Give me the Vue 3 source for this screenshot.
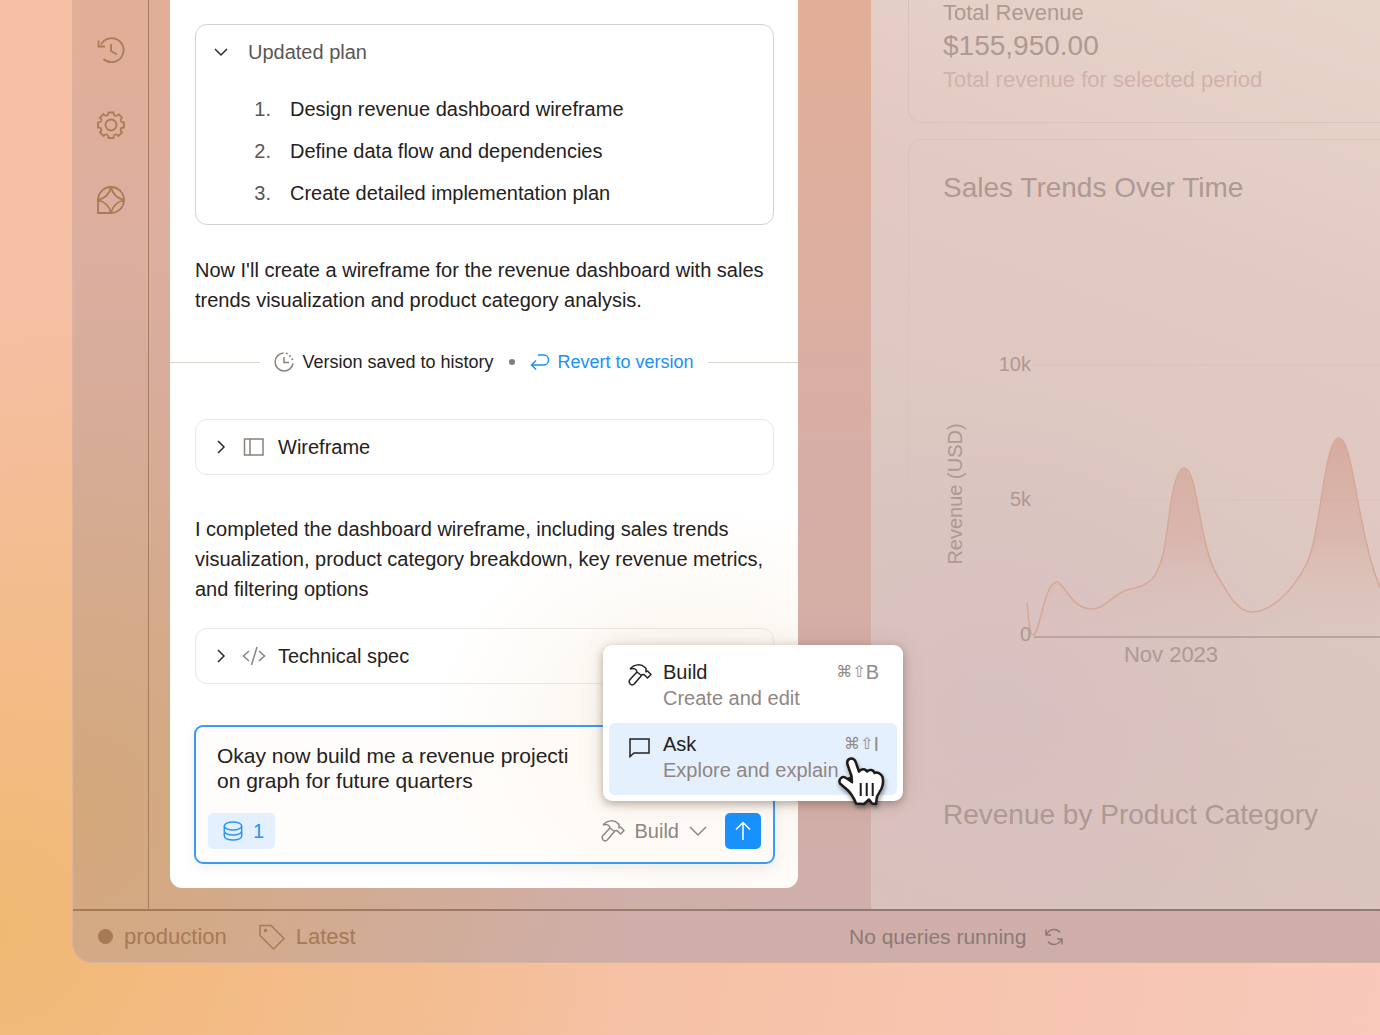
<script setup>
import { ref } from 'vue'

const plan = [
  'Design revenue dashboard wireframe',
  'Define data flow and dependencies',
  'Create detailed implementation plan',
]

const draft = ref('Okay now build me a revenue projecti\non graph for future quarters')

const hammer =
  'M2 6C6 1 13 .5 17 4.5L18 5.5V9L19.5 8L23 11.5L19.5 15L16 11.5L13 12M2 6C6 4.5 8.5 6 9 9L2 16.5C.8 18 1.2 19.8 2.2 21C3.4 22.2 5 22.2 6.200 21L13.500 12.500L9 9'

const curve =
  'M84 263 C86 284 87 295 90 295 C97 295 101 242 114 242 C121 242 128 269 149 269 C162 269 169 255 184 250 C194 247 201 247 209 239 C221 226 223 197 228 162 C232 138 236 128 241 128 C250 128 253 158 260 192 C263 207 267 223 274 235 C286 256 295 272 309 272 C327 272 348 254 364 223 C378 194 381 98 396 98 C406 98 412 150 419 182 C425 212 430 232 437 247 C446 266 458 274 472 274 C492 274 510 262 520 246'
</script>

<template>
  <div class="page">
    <div class="window">
      <div class="workspace">
        <nav class="rail" aria-label="Tools">
          <button type="button" aria-label="History">
            <svg viewBox="0 0 28 28">
              <path d="M6.5 23A12 12 0 1 0 4 8.5M1.5 4.500V10.500H8M14 8V15L20 18.500" />
            </svg>
          </button>
          <button type="button" aria-label="Settings">
            <svg viewBox="0 0 28 28">
              <circle cx="14" cy="14" r="5.5" />
              <path d="M11.5 1.5H16.5Q16.6 4.6 18.4 4.9Q20.3 5 21.7 3.3L25 6.5Q23 8.7 23.6 10Q24.2 11.5 27 11.5V16.5Q24 16.6 23.6 18Q23 19.5 25 21.5L21.5 25Q19.5 23 18 23.6Q16.6 24.2 16.5 27H11.5Q11.4 24.2 10 23.6Q8.5 23 6.5 25L3 21.5Q5 19.5 4.4 18Q3.8 16.6 1 16.5V11.5Q3.8 11.4 4.4 10Q5 8.5 3 6.5L6.5 3Q8.3 5 9.8 4.6Q11.4 4 11.5 1.5Z" />
            </svg>
          </button>
          <button type="button" aria-label="Assistant">
            <svg viewBox="0 0 28 28">
              <path d="M1 27V14A13 13 0 1 1 14 27ZM14 1Q12 11 1 14Q12 17 14 27Q16 17 27 14Q16 11 14 1" />
            </svg>
          </button>
        </nav>

        <div class="chat-column">
          <main class="chat">
            <section class="plan">
              <button type="button" class="plan-head">
                <svg class="chev" viewBox="0 0 14 14"><path d="M1 4L7 10L13 4" /></svg>
                Updated plan
              </button>
              <ol>
                <li v-for="(step, i) in plan" :key="step">
                  <span class="num">{{ i + 1 }}.</span>{{ step }}
                </li>
              </ol>
            </section>

            <p class="msg first">
              Now I'll create a wireframe for the revenue dashboard with sales<br />
              trends visualization and product category analysis.
            </p>

            <div class="version">
              <span class="rule"></span>
              <svg class="saved" viewBox="0 0 20 20">
                <path d="M9.5 1A9 9 0 1 0 19 11.5M10 5V10.5H15" />
                <path class="dots" d="M12.8 1.5V1.5M16 4V4M18.3 7.3V7.3" />
              </svg>
              <span>Version saved to history</span>
              <span class="dot"></span>
              <a href="#">
                <svg viewBox="0 0 20 18"><path d="M8 2H14A4.5 5 0 0 1 14 12H1.5M6 7.5L1.5 12L6 16.5" /></svg>
                Revert to version
              </a>
              <span class="rule"></span>
            </div>

            <button type="button" class="artifact">
              <svg class="chev" viewBox="0 0 14 14"><path d="M4 1L10 7L4 13" /></svg>
              <svg class="kind" viewBox="0 0 24 20"><path d="M2.5 2H21V18H2.5ZM8 2V18" /></svg>
              Wireframe
            </button>

            <p class="msg second">
              I completed the dashboard wireframe, including sales trends<br />
              visualization, product category breakdown, key revenue metrics,<br />
              and filtering options
            </p>

            <button type="button" class="artifact">
              <svg class="chev" viewBox="0 0 14 14"><path d="M4 1L10 7L4 13" /></svg>
              <svg class="kind" viewBox="0 0 24 20"><path d="M7 5L1.5 10L7 15M17 5L22.5 10L17 15M15 1L9.5 19" /></svg>
              Technical spec
            </button>

            <form class="composer" @submit.prevent>
              <textarea v-model="draft" rows="2" aria-label="Message" spellcheck="false"></textarea>
              <div class="tools">
                <button type="button" class="sources" aria-label="1 data source">
                  <svg viewBox="0 0 20 20">
                    <ellipse cx="10" cy="5" rx="8.7" ry="4" />
                    <path d="M1.3 5V15C1.3 17.3 5 19 10 19S18.7 17.3 18.7 15V5M1.3 10C1.3 12.3 5 14 10 14S18.7 12.3 18.7 10" />
                  </svg>
                  1
                </button>
                <button type="button" class="mode" aria-haspopup="menu" aria-expanded="true">
                  <svg class="hammer" viewBox="0 0 24 24"><path :d="hammer" /></svg>
                  Build
                  <svg class="arrow" viewBox="0 0 18 14"><path d="M1 3L9 11L17 3" /></svg>
                </button>
                <button type="submit" class="send" aria-label="Send">
                  <svg viewBox="0 0 20 20"><path d="M10 19V1.5M3 8.5L10 1.5L17 8.5" /></svg>
                </button>
              </div>

              <div class="menu" role="menu">
                <button type="button" role="menuitem">
                  <svg class="hammer" viewBox="0 0 24 24"><path :d="hammer" /></svg>
                  <span class="label">Build<small>Create and edit</small></span>
                  <kbd><i>⌘⇧</i>B</kbd>
                </button>
                <button type="button" role="menuitem" class="active">
                  <svg viewBox="0 0 24 24"><path d="M2 4H21V18H6L2 21.5Z" /></svg>
                  <span class="label">Ask<small>Explore and explain</small></span>
                  <kbd><i>⌘⇧</i>I</kbd>
                </button>
                <svg class="cursor" viewBox="0 0 50 52">
                  <path class="hand" d="M16 26L15.5 20L11.500 8.500C10 2 17 .500 19.500 5.500L23 15.500C25 12.500 29.500 12.500 31 15.500C33.500 13 37.500 13.500 38.500 17C41.500 15.500 45.500 18 46.500 21C47.500 25 47 29 45.500 32.500L41 40.500L40 48L36 47.500L33 43.500L28 48L20 47.500C18 42 15 37.500 11.500 34L4 27.500C2 23 6.500 19.500 10 22Z" />
                  <path class="gap" d="M11 22L15.500 20L17 28Z" />
                  <path class="fingers" d="M24.7 27V40M30.7 27V40M36.7 27V40" />
                </svg>
              </div>
            </form>
          </main>
        </div>

        <aside class="dashboard">
          <section class="card total">
            <h2>Total Revenue</h2>
            <strong>$155,950.00</strong>
            <p>Total revenue for selected period</p>
          </section>
          <section class="card trends">
            <h1>Sales Trends Over Time</h1>
            <svg class="chart" role="img" aria-label="Revenue by month">
              <defs>
                <linearGradient id="area" x1="0" y1="98" x2="0" y2="297" gradientUnits="userSpaceOnUse">
                  <stop offset="0" stop-color="#cf8f7c" stop-opacity=".5" />
                  <stop offset=".5" stop-color="#d39a8c" stop-opacity=".36" />
                  <stop offset=".8" stop-color="#d6a79c" stop-opacity=".1" />
                  <stop offset="1" stop-color="#d6a79c" stop-opacity="0" />
                </linearGradient>
              </defs>
              <line class="grid" x1="91" y1="25" x2="100%" y2="25" />
              <line class="grid" x1="91" y1="160" x2="100%" y2="160" />
              <path class="area" :d="curve + 'V297H90Z'" />
              <path class="line" :d="curve" />
              <line class="axis" x1="91" y1="297" x2="100%" y2="297" />
              <text x="88" y="31" text-anchor="end">10k</text>
              <text x="88" y="166" text-anchor="end">5k</text>
              <text x="88" y="301" text-anchor="end">0</text>
              <text class="month" x="228" y="322" text-anchor="middle">Nov 2023</text>
              <text transform="translate(19 154) rotate(-90)" text-anchor="middle">Revenue (USD)</text>
            </svg>
          </section>
          <section class="card category">
            <h1>Revenue by Product Category</h1>
          </section>
        </aside>
      </div>

      <footer class="status">
        <div class="env">
          <span class="bullet"></span>
          <span>production</span>
          <svg viewBox="0 0 28 28">
            <path d="M2 2.5H13L26 15.5L15.5 26L2 12.5Z" /><circle cx="7.5" cy="7.5" r="1" />
          </svg>
          <span>Latest</span>
        </div>
        <div class="queries">
          <span>No queries running</span>
          <svg viewBox="0 0 18 18">
            <path d="M15 4.500C12 .5 5 0 1.5 6.5M1 1.500V7H6M3 13.500C6 17.500 13 18 16.5 11.5M17 16.500V11H12" />
          </svg>
        </div>
      </footer>
    </div>
  </div>
</template>

<style>
body {
  margin: 0;
}
</style>

<style scoped>
.page {
  box-sizing: border-box;
  min-height: 100vh;
  padding: 0 0 72px 72px;
  overflow: hidden;
  font-family: "Liberation Sans", Arial, sans-serif;
  font-size: 20px;
  color: #242120;
  background:
    radial-gradient(circle at 0 90%, #f0b973 0, rgba(240, 185, 115, 0) 620px),
    linear-gradient(100deg, #f7bfa5 0, #f5bf9f 40%, #f8c9bb 100%);
}

.page * {
  box-sizing: border-box;
}

button {
  margin: 0;
  padding: 0;
  border: 0;
  background: none;
  font: inherit;
  color: inherit;
  text-align: left;
}

svg {
  flex: none;
  fill: none;
  stroke: currentColor;
  stroke-width: 1.5;
}

.window {
  border: solid #d9b3a0;
  border-width: 0 0 1px 1px;
  border-radius: 0 0 0 20px;
  background:
    radial-gradient(circle at 0 85%, #d4a87a 0, rgba(212, 168, 122, 0) 560px),
    linear-gradient(180deg, #e2ae97 0, #d8aea5 45%, #cfaeaa 100%);
}

.workspace {
  display: flex;
  align-items: stretch;
}

.rail {
  flex: none;
  display: flex;
  flex-direction: column;
  align-items: center;
  gap: 47px;
  width: 76px;
  padding-top: 36px;
  border-right: 1px solid #a67c5e;
  color: #a97b57;
}

.rail button,
.rail svg {
  display: block;
  width: 28px;
  height: 28px;
}

.rail svg {
  stroke-width: 1.8;
}

.chat-column {
  flex: none;
  position: relative;
  z-index: 1;
  width: 722px;
  padding: 0 73px 21px 21px;
}

.chat {
  padding: 24px 24px 24px 25px;
  border-radius: 0 0 12px 12px;
  background:
    radial-gradient(ellipse 270px 230px at 530px 735px, #faf2ea 0, #fcf8f2 45%, rgba(255, 255, 255, 0) 100%),
    #fff;
}

.plan {
  padding-bottom: 10px;
  border: 1px solid #d3d2d2;
  border-radius: 12px;
}

.plan-head {
  display: flex;
  align-items: center;
  gap: 20px;
  width: 100%;
  height: 54px;
  padding-left: 18px;
  color: #5b5654;
}

.chev {
  width: 14px;
  height: 14px;
  color: #2e2a29;
}

.plan ol {
  margin: 9px 0 0;
  padding: 0;
  list-style: none;
}

.plan li {
  display: flex;
  gap: 19px;
  line-height: 42px;
}

.num {
  width: 75px;
  text-align: right;
  color: #5b5654;
}

.msg {
  margin: 0;
  line-height: 30px;
  white-space: nowrap;
}

.msg.first {
  margin-top: 30px;
}

.msg.second {
  margin: 39px 0 24px;
}

.version {
  display: flex;
  align-items: center;
  height: 30px;
  margin: 32px -24px 42px -25px;
  font-size: 18px;
}

.rule {
  flex: 1;
  height: 1px;
  background: #ddd3ca;
}

.saved {
  width: 20px;
  height: 20px;
  margin: 0 8px 0 14px;
  color: #8a807c;
}

.dots {
  stroke-width: 2;
  stroke-linecap: round;
}

.dot {
  width: 6px;
  height: 6px;
  margin: 0 15px;
  border-radius: 50%;
  background: #857a77;
}

.version a {
  display: flex;
  align-items: center;
  gap: 8px;
  margin-right: 14px;
  color: #1a90fb;
  text-decoration: none;
}

.version a svg {
  width: 20px;
  height: 18px;
}

.artifact {
  display: flex;
  align-items: center;
  width: 100%;
  height: 56px;
  padding-left: 18px;
  border: 1px solid #ece7e3;
  border-radius: 12px;
}

.kind {
  width: 24px;
  height: 20px;
  margin: 0 12px 0 14px;
  color: #8a807c;
}

.composer {
  position: relative;
  margin: 41px -1px 0;
  padding: 16px 12px 13px;
  border: 2px solid #3a9bf6;
  border-radius: 9px;
  background: rgba(255, 252, 247, 0.5);
  box-shadow: 0 4px 12px rgba(90, 80, 60, 0.08);
}

textarea {
  display: block;
  width: 370px;
  height: 52px;
  margin: 0 0 18px 9px;
  padding: 0;
  border: 0;
  outline: 0;
  resize: none;
  overflow: hidden;
  background: none;
  font: 21px/25px "Liberation Sans", Arial, sans-serif;
  color: #242120;
}

.tools {
  display: flex;
  align-items: center;
}

.sources {
  display: flex;
  align-items: center;
  gap: 10px;
  height: 36px;
  padding: 0 11px 0 15px;
  border-radius: 5px;
  background: #e4f0fe;
  color: #2a94fa;
}

.sources svg {
  width: 20px;
  height: 20px;
}

.mode {
  display: flex;
  align-items: center;
  gap: 10px;
  margin: 0 18px 0 auto;
  color: #8e8583;
}

.hammer {
  width: 24px;
  height: 24px;
  stroke-linejoin: round;
}

.arrow {
  width: 18px;
  height: 14px;
}

.send {
  display: grid;
  place-items: center;
  width: 36px;
  height: 36px;
  border-radius: 5px;
  background: #1a90fb;
  color: #fff;
}

.send svg {
  width: 20px;
  height: 20px;
}

.menu {
  position: absolute;
  right: -130px;
  bottom: 61px;
  width: 300px;
  padding: 6px;
  border-radius: 9px;
  background: #fff;
  box-shadow: 0 3px 8px rgba(70, 40, 30, 0.35), 0 0 24px rgba(110, 70, 50, 0.12);
}

.menu button {
  display: flex;
  align-items: flex-start;
  gap: 11px;
  width: 100%;
  height: 72px;
  padding: 8px 18px 0 19px;
  border-radius: 6px;
  line-height: 26px;
}

.menu button.active {
  background: #e4f0fe;
}

.menu button svg {
  width: 24px;
  height: 24px;
  margin-top: 4px;
}

.label {
  flex: 1;
  min-width: 0;
  white-space: nowrap;
}

.label small {
  display: block;
  font-size: 20px;
  color: #8f8683;
}

kbd {
  flex: none;
  display: flex;
  font-family: inherit;
  font-size: 20px;
  color: #948a87;
}

kbd i {
  font: 16px/26px "DejaVu Sans", sans-serif;
}

.cursor {
  position: absolute;
  left: 233px;
  top: 111px;
  width: 50px;
  height: 52px;
  filter: drop-shadow(1px 3px 2px rgba(0, 0, 0, 0.4));
}

.hand {
  fill: #fff;
  stroke: #1c1a1a;
  stroke-width: 2.5;
  stroke-linejoin: round;
}

.gap {
  fill: #1c1a1a;
  stroke: none;
}

.fingers {
  stroke: #1c1a1a;
  stroke-width: 2;
}

.dashboard {
  flex: 1;
  min-width: 0;
  display: flex;
  flex-direction: column;
  gap: 16px;
  padding-left: 37px;
  overflow: hidden;
  color: #ae9993;
  background:
    radial-gradient(circle at 25% 80%, rgba(215, 190, 193, 0.8) 0, rgba(215, 190, 193, 0) 340px),
    linear-gradient(200deg, #e8d5ca 0, #e2cac3 30%, #dcc7c0 60%, #d9c3bb 100%);
}

.card {
  padding-left: 34px;
  border: 1px solid #dbc3bd;
  border-right: 0;
  border-radius: 14px 0 0 14px;
}

.total {
  height: 123px;
  border-top: 0;
  border-top-left-radius: 0;
}

.total h2,
.total p {
  margin: 0;
  font-size: 22px;
  font-weight: 400;
  line-height: 25px;
}

.total strong {
  display: block;
  font-size: 28px;
  font-weight: 400;
  line-height: 42px;
}

.total p {
  color: #d0b3ac;
}

.card h1 {
  margin: 0;
  font-size: 28px;
  font-weight: 400;
  line-height: 36px;
  white-space: nowrap;
}

.trends {
  height: 610px;
  padding-top: 30px;
}

.category {
  flex: 1;
  padding-top: 31px;
  border-bottom: 0;
  border-bottom-left-radius: 0;
}

.chart {
  display: block;
  width: 100%;
  height: 340px;
  margin-top: 134px;
}

.chart text {
  fill: #ae9993;
  stroke: none;
  font-size: 20px;
}

.chart .month {
  font-size: 22px;
}

.grid {
  stroke: #d7c3bd;
  stroke-width: 1;
}

.axis {
  stroke: #b19b95;
}

.area {
  fill: url(#area);
  stroke: none;
}

.line {
  stroke: #d6a897;
}

.status {
  display: flex;
  align-items: center;
  height: 53px;
  border-top: 2px solid #9c7d69;
  border-image: linear-gradient(90deg, #a67a54, #907a76 60%) 1;
  font-size: 22px;
}

.env {
  flex: none;
  display: flex;
  align-items: center;
  width: 776px;
  padding-left: 25px;
  color: #a67a54;
}

.env svg {
  width: 28px;
  height: 28px;
  margin: 0 10px 0 31px;
}

.bullet {
  width: 15px;
  height: 15px;
  margin-right: 11px;
  border-radius: 50%;
  background: #a67a54;
}

.queries {
  display: flex;
  align-items: center;
  gap: 19px;
  font-size: 21px;
  color: #8d7a76;
}

.queries svg {
  width: 18px;
  height: 18px;
}
</style>
